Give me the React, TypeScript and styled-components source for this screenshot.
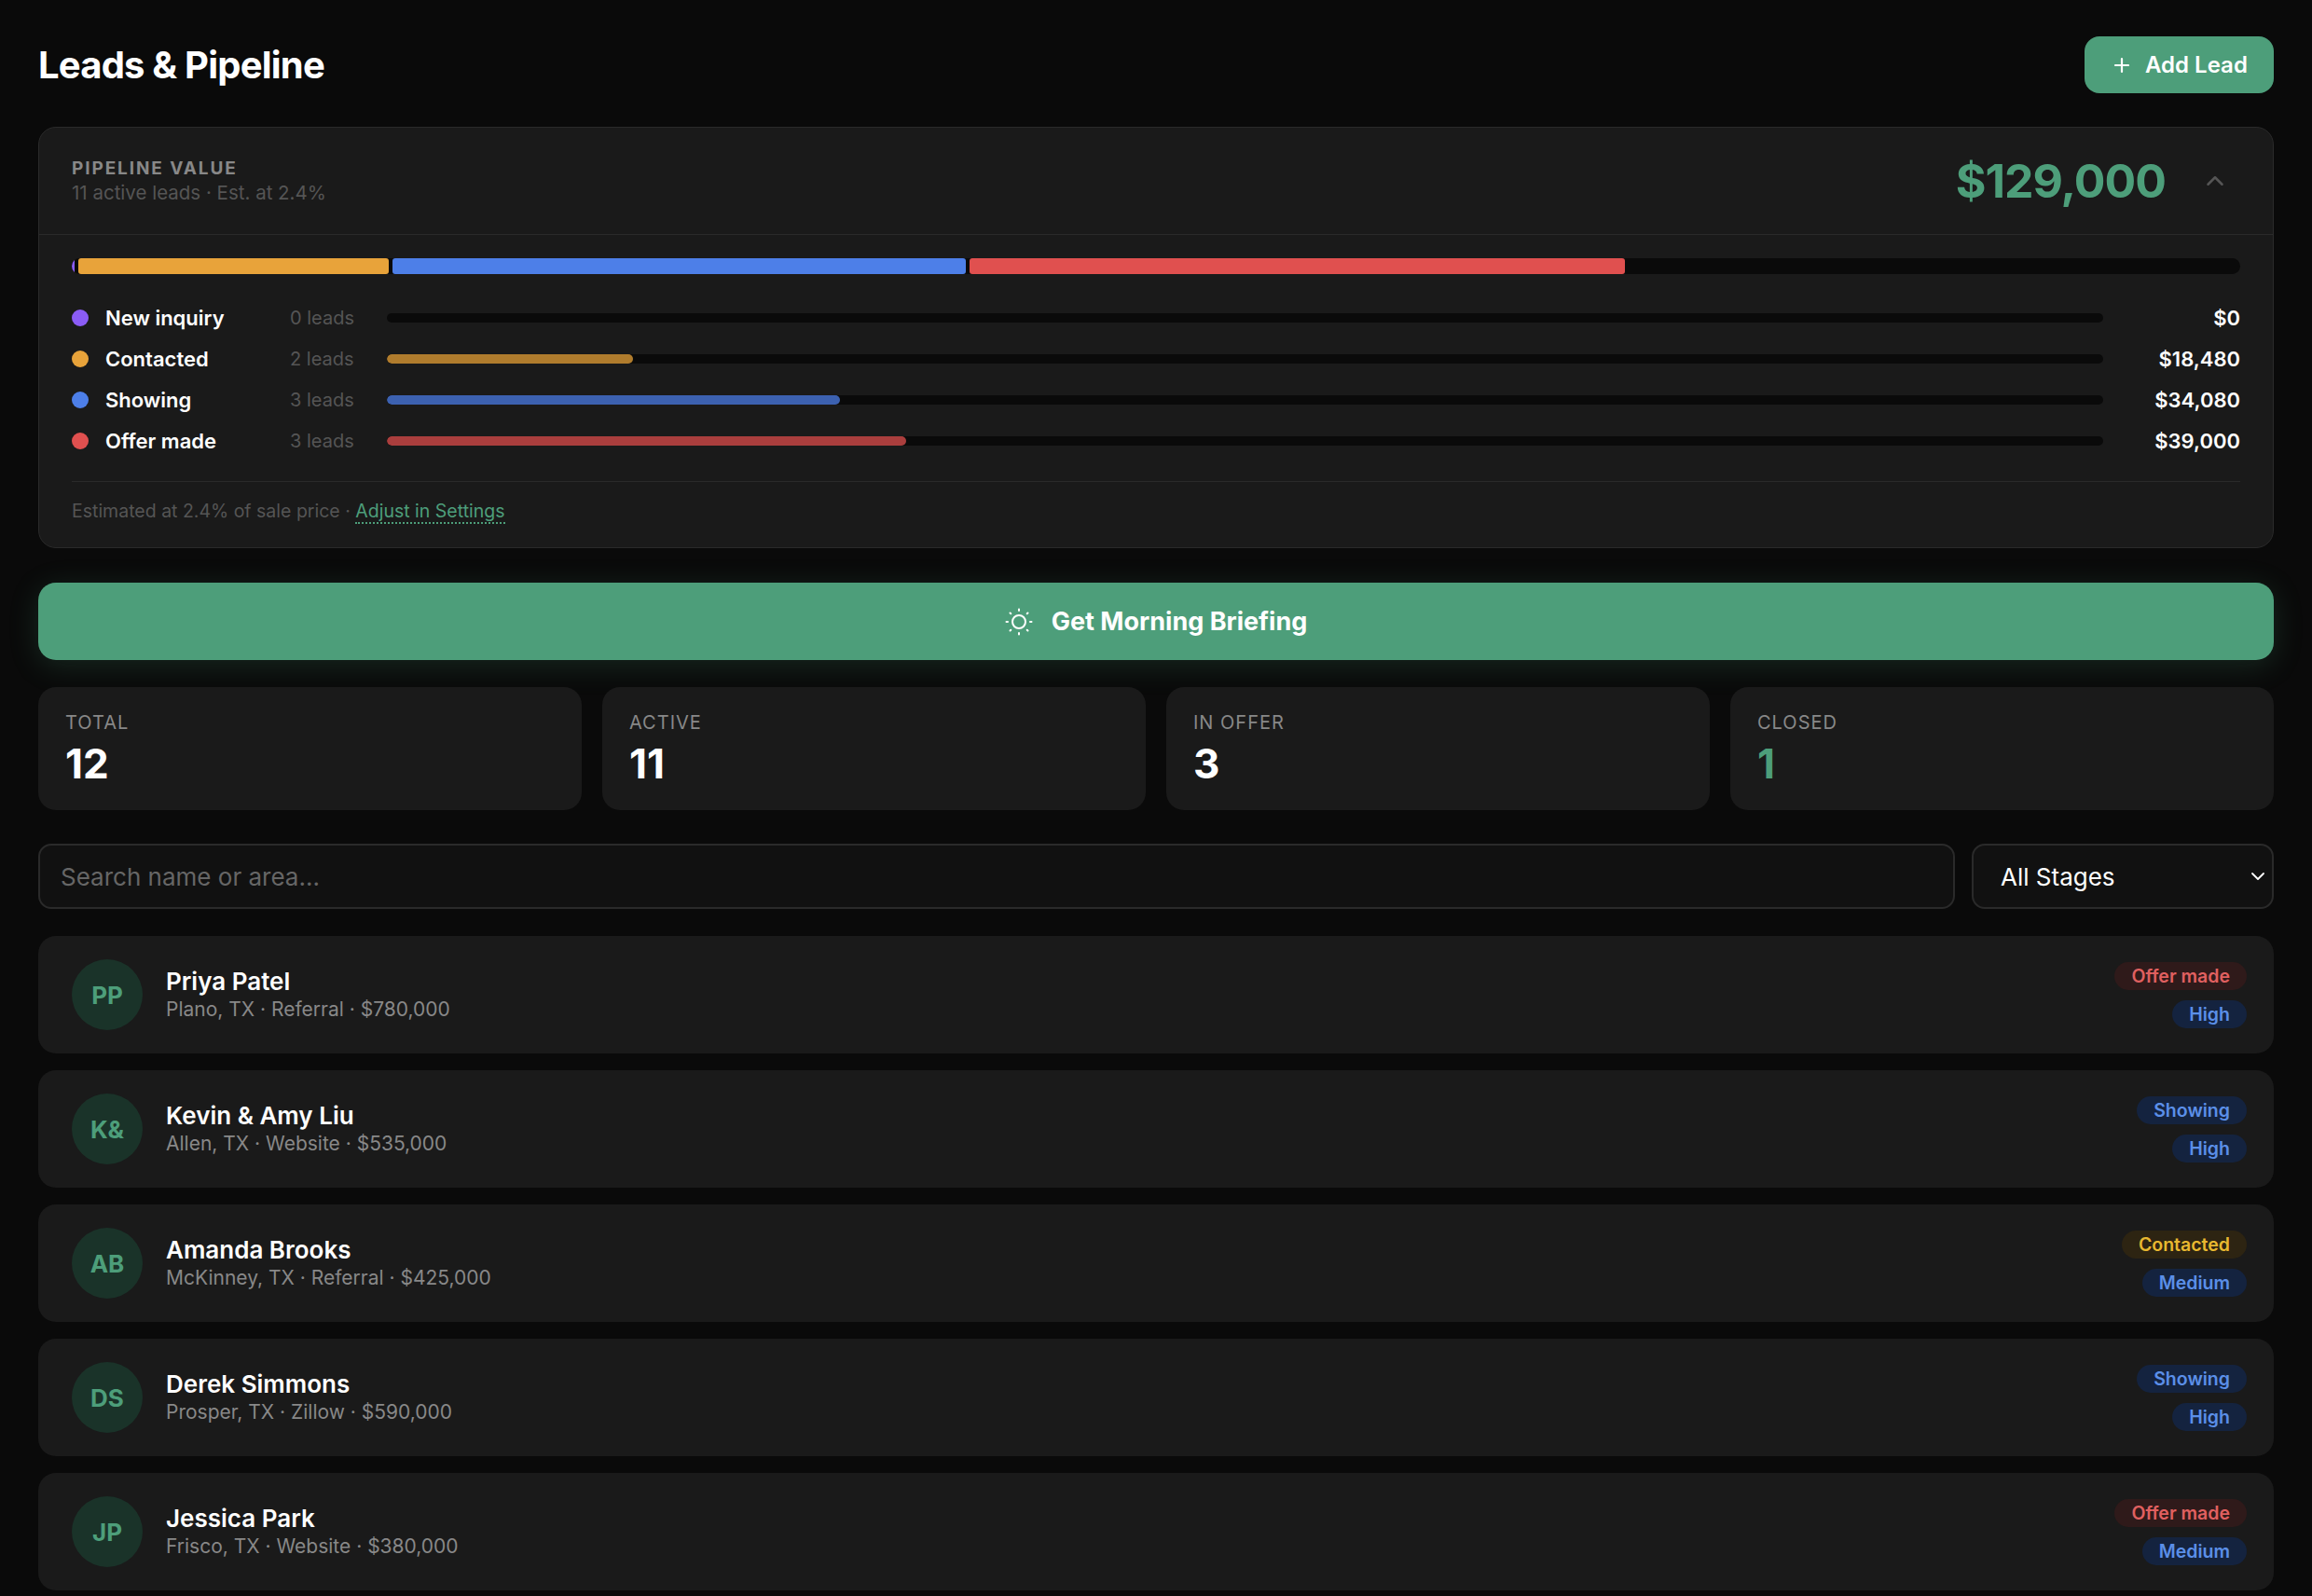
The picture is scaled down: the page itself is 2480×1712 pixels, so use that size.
import React from 'react';
import styled, { createGlobalStyle } from 'styled-components';
import { ChevronUp, ChevronDown, Plus } from 'lucide-react';

const Global = createGlobalStyle`
  html, body { margin: 0; padding: 0; background: #0a0a0a; }
  body { font-family: Inter, "Liberation Sans", sans-serif; color: #fff; -webkit-font-smoothing: antialiased; }
  * { box-sizing: border-box; }
`;

const Page = styled.div`
  height: 1712px;
  overflow: hidden;
  padding: 39px 41px 0;
  background: #0a0a0a;
`;
const Header = styled.header`
  display: flex;
  align-items: center;
  justify-content: space-between;
  height: 61px;
  margin-bottom: 36px;
`;
const Title = styled.h1`
  margin: 0;
  font-size: 40px;
  font-weight: 700;
  letter-spacing: -0.8px;
  color: #fff;
`;
const AddButton = styled.button`
  display: flex;
  align-items: center;
  gap: 13px;
  width: 203px;
  height: 61px;
  padding: 0 0 0 28px;
  border: 0;
  border-radius: 16px;
  background: #4d9e7a;
  color: #fff;
  font: 600 24px Inter, sans-serif;
`;
const PipelineCard = styled.section`
  height: 452px;
  margin-bottom: 37px;
  background: #1a1a1a;
  border: 1.5px solid #2a2a2a;
  border-radius: 19px;
  overflow: hidden;
`;
const PipelineHead = styled.div`
  display: flex;
  align-items: center;
  height: 115px;
  padding: 0 35px;
  border-bottom: 1.5px solid #2a2a2a;
`;
const HeadText = styled.div`
  flex: 1;
`;
const Eyebrow = styled.div`
  font-size: 19px;
  line-height: 26px;
  font-weight: 700;
  letter-spacing: 1.9px;
  color: #888;
`;
const HeadSub = styled.div`
  font-size: 20.5px;
  line-height: 26px;
  color: #555;
`;
const BigValue = styled.div`
  font-size: 50px;
  font-weight: 700;
  letter-spacing: -1px;
  color: #4d9e7a;
`;
const Collapse = styled.span`
  display: flex;
  margin: 0 12px 0 38px;
  color: #555;
`;
const PipelineBody = styled.div`
  padding: 25px 35px 0;
`;
const StackTrack = styled.div`
  display: flex;
  gap: 4px;
  height: 17px;
  margin-bottom: 25px;
  background: #0a0a0a;
  border-radius: 9px;
  overflow: hidden;
`;
const StackSegment = styled.div<{ $color: string }>`
  height: 100%;
  border-radius: 3px;
  background: ${(p) => p.$color};
`;
const StageRow = styled.div`
  display: flex;
  align-items: center;
  height: 44px;
`;
const Dot = styled.span<{ $color: string }>`
  flex: none;
  width: 18px;
  height: 18px;
  margin-right: 18px;
  border-radius: 50%;
  background: ${(p) => p.$color};
`;
const StageName = styled.span`
  flex: none;
  width: 198px;
  font-size: 22px;
  font-weight: 600;
  color: #fff;
`;
const StageCount = styled.span`
  flex: none;
  width: 104px;
  font-size: 20px;
  color: #555;
`;
const StageTrack = styled.div`
  flex: 1;
  height: 10px;
  border-radius: 5px;
  background: #0a0a0a;
  overflow: hidden;
`;
const StageFill = styled.div<{ $color: string }>`
  height: 100%;
  border-radius: 5px;
  background: ${(p) => p.$color};
  opacity: 0.75;
`;
const StageValue = styled.span`
  flex: none;
  width: 147px;
  text-align: right;
  font-size: 22px;
  font-weight: 600;
  color: #fff;
`;
const PipelineFoot = styled.div`
  margin-top: 21px;
  padding-top: 17px;
  border-top: 1.5px solid #2a2a2a;
  font-size: 19.5px;
  line-height: 28px;
  color: #555;
`;
const FootLink = styled.a`
  color: #4d9e7a;
  border-bottom: 2px dotted #4d9e7a;
`;
const Briefing = styled.button`
  display: flex;
  align-items: center;
  justify-content: center;
  gap: 20px;
  width: 100%;
  height: 83px;
  margin-bottom: 29px;
  border: 0;
  border-radius: 19px;
  background: #4d9e7a;
  color: #fff;
  font: 700 27px Inter, sans-serif;
  box-shadow: 0 6px 32px rgba(77, 158, 122, 0.2);
`;
const Stats = styled.div`
  display: grid;
  grid-template-columns: repeat(4, 1fr);
  gap: 22px;
  margin-bottom: 36px;
`;
const StatCard = styled.div`
  height: 132px;
  padding: 25px 29px 0;
  background: #1a1a1a;
  border-radius: 19px;
`;
const StatLabel = styled.div`
  font-size: 20px;
  line-height: 26px;
  letter-spacing: 1px;
  color: #888;
`;
const StatValue = styled.div<{ $accent?: boolean }>`
  margin-top: 4px;
  font-size: 44px;
  line-height: 54px;
  font-weight: 700;
  color: ${(p) => (p.$accent ? '#4d9e7a' : '#fff')};
`;
const Filters = styled.div`
  display: flex;
  gap: 18px;
  margin-bottom: 29px;
`;
const Search = styled.input`
  flex: 1;
  height: 70px;
  padding: 0 22px;
  background: #111;
  border: 2px solid #2a2a2a;
  border-radius: 14px;
  color: #fff;
  font: 400 26px Inter, sans-serif;
  outline: none;
  &::placeholder { color: #666; opacity: 1; }
`;
const SelectBox = styled.div`
  position: relative;
  flex: none;
  width: 324px;
  height: 70px;
`;
const Select = styled.select`
  width: 100%;
  height: 100%;
  padding: 0 29px;
  appearance: none;
  background: #111;
  border: 2px solid #2a2a2a;
  border-radius: 14px;
  color: #fff;
  font: 400 26px Inter, sans-serif;
`;
const SelectIcon = styled.span`
  position: absolute;
  top: 23px;
  right: 5px;
  display: flex;
  color: #fff;
`;
const LeadList = styled.div`
  display: flex;
  flex-direction: column;
  gap: 18px;
`;
const LeadCard = styled.article`
  display: flex;
  align-items: center;
  flex: none;
  height: 126px;
  padding: 0 29px 0 36px;
  background: #1a1a1a;
  border-radius: 19px;
`;
const Avatar = styled.div`
  display: flex;
  align-items: center;
  justify-content: center;
  flex: none;
  width: 76px;
  height: 76px;
  margin-right: 25px;
  border-radius: 50%;
  background: #1a3329;
  color: #4d9e7a;
  font-size: 26px;
  font-weight: 700;
`;
const LeadInfo = styled.div`
  flex: 1;
`;
const LeadName = styled.div`
  font-size: 26px;
  line-height: 32px;
  font-weight: 600;
  color: #fff;
`;
const LeadMeta = styled.div`
  font-size: 21px;
  line-height: 28px;
  color: #888;
`;
const Badges = styled.div`
  display: flex;
  flex-direction: column;
  align-items: flex-end;
  gap: 11px;
`;
const tones = {
  red: { fg: '#e06060', bg: '#2f1a1a' },
  blue: { fg: '#5b8fe8', bg: '#14233f' },
  yellow: { fg: '#e8b830', bg: '#2d2412' },
};
type Tone = keyof typeof tones;
const Badge = styled.span<{ $tone: Tone }>`
  height: 30px;
  padding: 0 18px;
  border-radius: 15px;
  font-size: 19.5px;
  line-height: 30px;
  font-weight: 600;
  color: ${(p) => tones[p.$tone].fg};
  background: ${(p) => tones[p.$tone].bg};
`;

const SunIcon = () => (
  <svg width="30" height="30" viewBox="0 0 30 30" fill="none" stroke="currentColor" strokeWidth="2" strokeLinecap="round">
    <circle cx="15" cy="15" r="7" />
    <path d="M15 1.5v1.5M15 27v1.5M1.5 15H3M27 15h1.5M5.5 5.5l.8.8M23.7 23.7l.8.8M5.5 24.5l.8-.8M23.7 6.3l.8-.8" />
  </svg>
);

const stages = [
  { name: 'New inquiry', count: '0 leads', value: '$0', pct: 0, color: '#8b5cf6' },
  { name: 'Contacted', count: '2 leads', value: '$18,480', pct: 14.33, color: '#e8a33a' },
  { name: 'Showing', count: '3 leads', value: '$34,080', pct: 26.42, color: '#4d7fe8' },
  { name: 'Offer made', count: '3 leads', value: '$39,000', pct: 30.23, color: '#e0504f' },
];
const stats = [
  { label: 'TOTAL', value: '12' },
  { label: 'ACTIVE', value: '11' },
  { label: 'IN OFFER', value: '3' },
  { label: 'CLOSED', value: '1', accent: true },
];
const leads: { initials: string; name: string; meta: string; stage: string; tone: Tone; priority: string }[] = [
  { initials: 'PP', name: 'Priya Patel', meta: 'Plano, TX · Referral · $780,000', stage: 'Offer made', tone: 'red', priority: 'High' },
  { initials: 'K&', name: 'Kevin & Amy Liu', meta: 'Allen, TX · Website · $535,000', stage: 'Showing', tone: 'blue', priority: 'High' },
  { initials: 'AB', name: 'Amanda Brooks', meta: 'McKinney, TX · Referral · $425,000', stage: 'Contacted', tone: 'yellow', priority: 'Medium' },
  { initials: 'DS', name: 'Derek Simmons', meta: 'Prosper, TX · Zillow · $590,000', stage: 'Showing', tone: 'blue', priority: 'High' },
  { initials: 'JP', name: 'Jessica Park', meta: 'Frisco, TX · Website · $380,000', stage: 'Offer made', tone: 'red', priority: 'Medium' },
];

export default function App() {
  return (
    <Page>
      <Global />
      <Header>
        <Title>Leads &amp; Pipeline</Title>
        <AddButton>
          <Plus size={24} strokeWidth={2.2} />
          Add Lead
        </AddButton>
      </Header>
      <PipelineCard>
        <PipelineHead>
          <HeadText>
            <Eyebrow>PIPELINE VALUE</Eyebrow>
            <HeadSub>11 active leads · Est. at 2.4%</HeadSub>
          </HeadText>
          <BigValue>$129,000</BigValue>
          <Collapse><ChevronUp size={30} strokeWidth={2} /></Collapse>
        </PipelineHead>
        <PipelineBody>
          <StackTrack>
            <StackSegment $color="#8b5cf6" style={{ width: 3 }} />
            {stages.slice(1).map((s) => (
              <StackSegment key={s.name} $color={s.color} style={{ width: `${s.pct}%` }} />
            ))}
          </StackTrack>
          {stages.map((s) => (
            <StageRow key={s.name}>
              <Dot $color={s.color} />
              <StageName>{s.name}</StageName>
              <StageCount>{s.count}</StageCount>
              <StageTrack>
                <StageFill $color={s.color} style={{ width: `${s.pct}%` }} />
              </StageTrack>
              <StageValue>{s.value}</StageValue>
            </StageRow>
          ))}
          <PipelineFoot>
            Estimated at 2.4% of sale price · <FootLink>Adjust in Settings</FootLink>
          </PipelineFoot>
        </PipelineBody>
      </PipelineCard>
      <Briefing>
        <SunIcon />
        Get Morning Briefing
      </Briefing>
      <Stats>
        {stats.map((s) => (
          <StatCard key={s.label}>
            <StatLabel>{s.label}</StatLabel>
            <StatValue $accent={s.accent}>{s.value}</StatValue>
          </StatCard>
        ))}
      </Stats>
      <Filters>
        <Search placeholder="Search name or area..." />
        <SelectBox>
          <Select defaultValue="all">
            <option value="all">All Stages</option>
          </Select>
          <SelectIcon><ChevronDown size={24} strokeWidth={1.8} /></SelectIcon>
        </SelectBox>
      </Filters>
      <LeadList>
        {leads.map((l) => (
          <LeadCard key={l.name}>
            <Avatar>{l.initials}</Avatar>
            <LeadInfo>
              <LeadName>{l.name}</LeadName>
              <LeadMeta>{l.meta}</LeadMeta>
            </LeadInfo>
            <Badges>
              <Badge $tone={l.tone}>{l.stage}</Badge>
              <Badge $tone="blue">{l.priority}</Badge>
            </Badges>
          </LeadCard>
        ))}
      </LeadList>
    </Page>
  );
}
